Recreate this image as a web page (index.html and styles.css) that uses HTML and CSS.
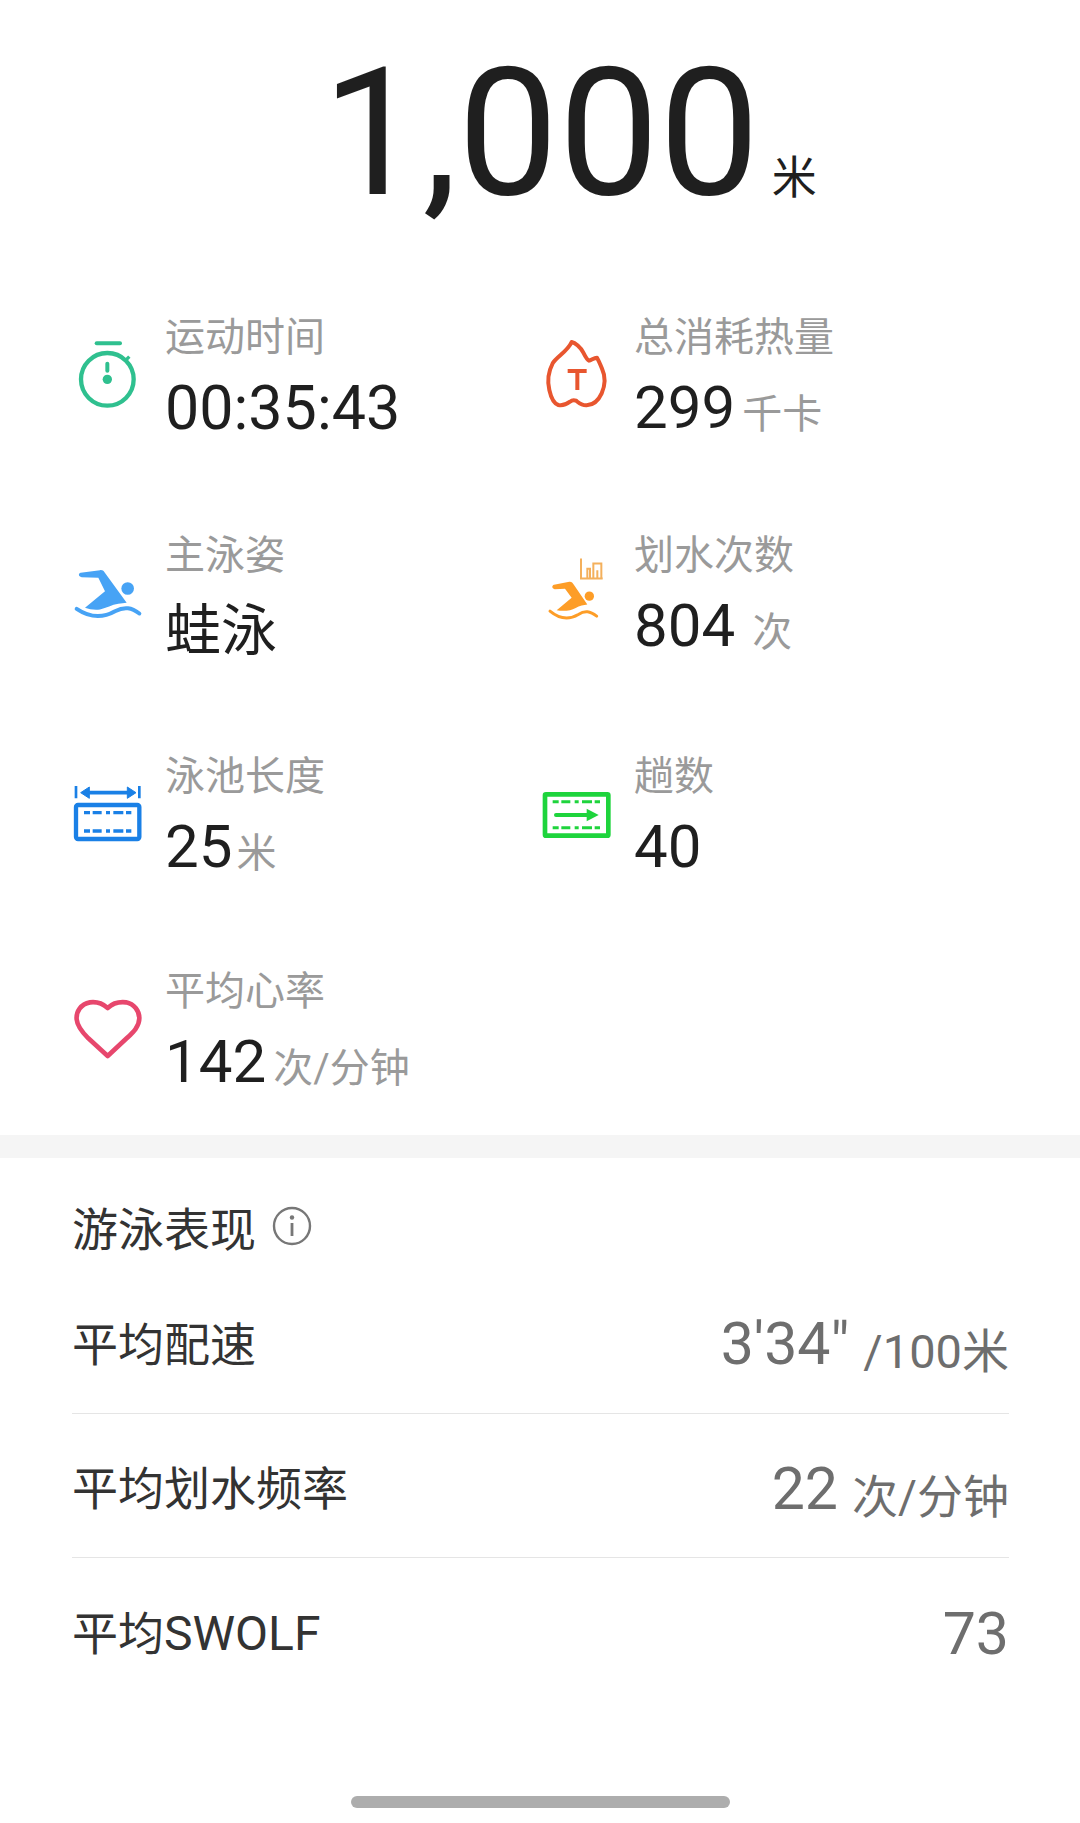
FILE: index.html
```html
<!DOCTYPE html>
<html lang="zh-CN">
<head>
  <meta charset="UTF-8" />
  <meta name="viewport" content="width=device-width, initial-scale=1.0"/>
  <title>游泳记录</title>
  <link rel="stylesheet" href="styles.css">
</head>
<body>
  <div class="total">
    <span class="total-num">1,000</span>
    <span class="total-unit">米</span>
  </div>

  <div class="stats">
    <div class="stat">
      <svg class="stat-icon" viewBox="72 138 204 210">
        <path d="M140 130H210" fill="none" stroke="#2fc08f" stroke-width="12" stroke-linecap="round"/>
        <circle cx="172" cy="238" r="79" fill="none" stroke="#2fc08f" stroke-width="13"/>
        <path d="M226 182L238 170" fill="none" stroke="#2fc08f" stroke-width="10"/>
        <path d="M172 191V212" fill="none" stroke="#2fc08f" stroke-width="12" stroke-linecap="round"/>
        <circle cx="172" cy="238" r="14" fill="#2fc08f"/>
      </svg>
      <div class="stat-text">
        <div class="stat-label">运动时间</div>
        <div class="stat-value stat-value-time">00:35:43</div>
      </div>
    </div>
    <div class="stat">
      <svg class="stat-icon" viewBox="69 108 204 210">
        <path d="M155 96C165 98 182 112 190 128C195 138 202 150 207 152C214 150 222 143 231 143C238 155 241 165 246 176C256 198 256 225 245 250C235 272 218 285 200 286C185 287 176 278 168 272C163 270 156 270 150 275C142 281 130 288 115 285C100 280 92 258 88 240C82 215 85 185 98 160C110 140 142 125 155 96Z" fill="none" stroke="#e8562f" stroke-width="12" stroke-linejoin="round"/>
        <path d="M143 183H200M172 183V240" fill="none" stroke="#e8562f" stroke-width="12"/>
      </svg>
      <div class="stat-text">
        <div class="stat-label">总消耗热量</div>
        <div class="stat-value">299<span class="unit">千卡</span></div>
      </div>
    </div>

    <div class="stat">
      <svg class="stat-icon" viewBox="72 73.5 204 210">
        <path d="M92 100L150 92C156 91 160 93 164 99L230 190L205 193C185 196 170 206 150 210C135 212 118 210 105 205L165 155L145 115L95 113C85 112 84 102 92 100Z" fill="#47a3f5"/>
        <circle cx="233" cy="147" r="19" fill="#47a3f5"/>
        <path d="M80 208C120 235 160 235 195 215C225 200 245 205 268 222" fill="none" stroke="#47a3f5" stroke-width="12" stroke-linecap="round"/>
      </svg>
      <div class="stat-text">
        <div class="stat-label">主泳姿</div>
        <div class="stat-value stat-value-cn">蛙泳</div>
      </div>
    </div>
    <div class="stat">
      <svg class="stat-icon" viewBox="39 73.5 204 210">
        <path d="M153 57V117H218" fill="none" stroke="#f4b05c" stroke-width="6"/>
        <path d="M172 117V88H180V117M190 117V72H214V117M202 117V92" fill="none" stroke="#f4b05c" stroke-width="6"/>
        <path d="M72 136L118 127C124 126 128 130 131 135L172 195L155 198C142 201 132 210 120 212C106 214 92 214 80 212L125 175L105 148L74 149C65 148 65 138 72 136Z" fill="#fd9d27"/>
        <circle cx="178" cy="170" r="14" fill="#fd9d27"/>
        <path d="M60 215C90 240 120 240 145 225C165 212 180 215 200 230" fill="none" stroke="#fd9d27" stroke-width="9" stroke-linecap="round"/>
      </svg>
      <div class="stat-text">
        <div class="stat-label">划水次数</div>
        <div class="stat-value">804<span class="unit unit-wide">次</span></div>
      </div>
    </div>

    <div class="stat">
      <svg class="stat-icon" viewBox="42 45 204 210">
        <path d="M48 48V85M238 48V85" fill="none" stroke="#1a80e6" stroke-width="8"/>
        <path d="M85 68H205" fill="none" stroke="#1a80e6" stroke-width="11"/>
        <path d="M62 68L88 51V85ZM228 68L202 51V85Z" fill="#1a80e6" stroke="#1a80e6" stroke-width="3" stroke-linejoin="round"/>
        <rect x="48" y="105" width="190" height="102" rx="6" fill="none" stroke="#1a80e6" stroke-width="13"/>
        <path class="lane-dash" d="M72 128H214M72 183H214" fill="none" stroke="#1a80e6" stroke-width="10"/>
      </svg>
      <div class="stat-text">
        <div class="stat-label">泳池长度</div>
        <div class="stat-value">25<span class="unit unit-tight">米</span></div>
      </div>
    </div>
    <div class="stat">
      <svg class="stat-icon" viewBox="39 30 204 210">
        <rect x="45" y="58" width="190" height="124" rx="3" fill="none" stroke="#1ed43c" stroke-width="14"/>
        <path class="lane-dash" d="M68 80H212M68 158H212" fill="none" stroke="#1ed43c" stroke-width="9"/>
        <path d="M78 120H175" fill="none" stroke="#1ed43c" stroke-width="12" stroke-linecap="round"/>
        <path d="M170 101L206 120L170 139Z" fill="#1ed43c"/>
      </svg>
      <div class="stat-text">
        <div class="stat-label">趟数</div>
        <div class="stat-value">40</div>
      </div>
    </div>

    <div class="stat">
      <svg class="stat-icon" viewBox="42 60 204 210">
        <path d="M143 84C125 68 105 65 90 67C62 72 48 95 50 118C52 140 70 160 85 175L143 228L200 175C218 158 238 140 238 115C238 92 222 72 198 67C180 65 160 68 143 84Z" fill="none" stroke="#e7476d" stroke-width="14" stroke-linejoin="round"/>
      </svg>
      <div class="stat-text">
        <div class="stat-label">平均心率</div>
        <div class="stat-value">142<span class="unit">次/分钟</span></div>
      </div>
    </div>
  </div>

  <div class="band"></div>

  <div class="perf">
    <div class="perf-title">
      <span>游泳表现</span>
      <svg class="info-icon" viewBox="0 0 40 40">
        <circle cx="20" cy="20" r="18" fill="none" stroke="#777" stroke-width="2.4"/>
        <circle cx="20" cy="11.500" r="2.200" fill="#777"/>
        <path d="M20 17V30" fill="none" stroke="#777" stroke-width="2.800"/>
      </svg>
    </div>
    <div class="perf-row">
      <span class="perf-name">平均配速</span>
      <span class="perf-value">3'34"<span class="perf-unit">/100米</span></span>
    </div>
    <div class="perf-row">
      <span class="perf-name">平均划水频率</span>
      <span class="perf-value">22<span class="perf-unit perf-unit-cn">次/分钟</span></span>
    </div>
    <div class="perf-row">
      <span class="perf-name">平均<span class="perf-latin">SWOLF</span></span>
      <span class="perf-value">73</span>
    </div>
  </div>

  <div class="home-bar"></div>
</body>
</html>
```

FILE: styles.css
```css
* {
  box-sizing: border-box;
}

body {
  margin: 0;
  height: 1823px;
  background: #fff;
  color: #1f1f1f;
  font-family: Roboto, "Noto Sans CJK SC", sans-serif;
  display: flex;
  flex-direction: column;
  overflow: hidden;
}

.total {
  height: 265px;
  padding-top: 3px;
  padding-left: 322px;
  display: flex;
  align-items: baseline;
}

.total-num {
  font-size: 179px;
  font-weight: 400;
  line-height: 260px;
}

.total-unit {
  font-size: 45px;
  margin-left: 12px;
  line-height: 260px;
}

.stats {
  display: grid;
  grid-template-columns: 469px 1fr;
  grid-template-rows: 216px 220px 221px 210px;
  padding-top: 8px;
  height: 870px;
}

.stat {
  display: flex;
  align-items: center;
}

.stat-icon {
  width: 68px;
  height: 70px;
  margin-left: 74px;
  flex-shrink: 0;
  overflow: visible;
}

.lane-dash {
  stroke-dasharray: 18 8 27 13 12 10 30 8 16 200;
}

.stat-text {
  margin-left: 23px;
}

.stat-label {
  font-size: 40px;
  line-height: 50px;
  margin-bottom: 4px;
  color: #9a9a9a;
}

.stat-value {
  height: 82px;
  font-size: 60px;
  line-height: 82px;
  color: #1f1f1f;
  white-space: nowrap;
}

.stat-value-time {
  font-size: 61px;
}

.stat-value-cn {
  font-size: 56px;
  padding-top: 5px;
}

.unit {
  font-size: 40px;
  line-height: 1;
  color: #9a9a9a;
  margin-left: 7px;
}

.unit-wide {
  margin-left: 17px;
}

.unit-tight {
  margin-left: 4px;
}

.band {
  height: 23px;
  background: #f5f5f5;
  flex-shrink: 0;
}

.perf {
  padding: 0 71px 0 72px;
}

.perf-title {
  height: 111px;
  padding-top: 24px;
  display: flex;
  align-items: center;
  font-size: 46px;
  color: #333;
}

.info-icon {
  width: 40px;
  height: 40px;
  margin-left: 16px;
}

.perf-row {
  height: 144.5px;
  display: flex;
  justify-content: space-between;
  align-items: center;
  border-bottom: 1px solid #e5e5e5;
  font-size: 46px;
  color: #333;
}

.perf-row:last-child {
  border-bottom: none;
}

.perf-latin {
  font-size: 48px;
}

.perf-value {
  font-size: 59px;
  line-height: 70px;
  padding-top: 7px;
  color: #6e6e6e;
}

.perf-unit {
  font-size: 47px;
  line-height: 1;
  margin-left: 14px;
  vertical-align: -4px;
}

.perf-unit-cn {
  font-size: 46px;
}

.home-bar {
  align-self: center;
  margin-top: auto;
  margin-bottom: 15px;
  width: 379px;
  height: 12px;
  border-radius: 6px;
  background: #adadad;
}
```
